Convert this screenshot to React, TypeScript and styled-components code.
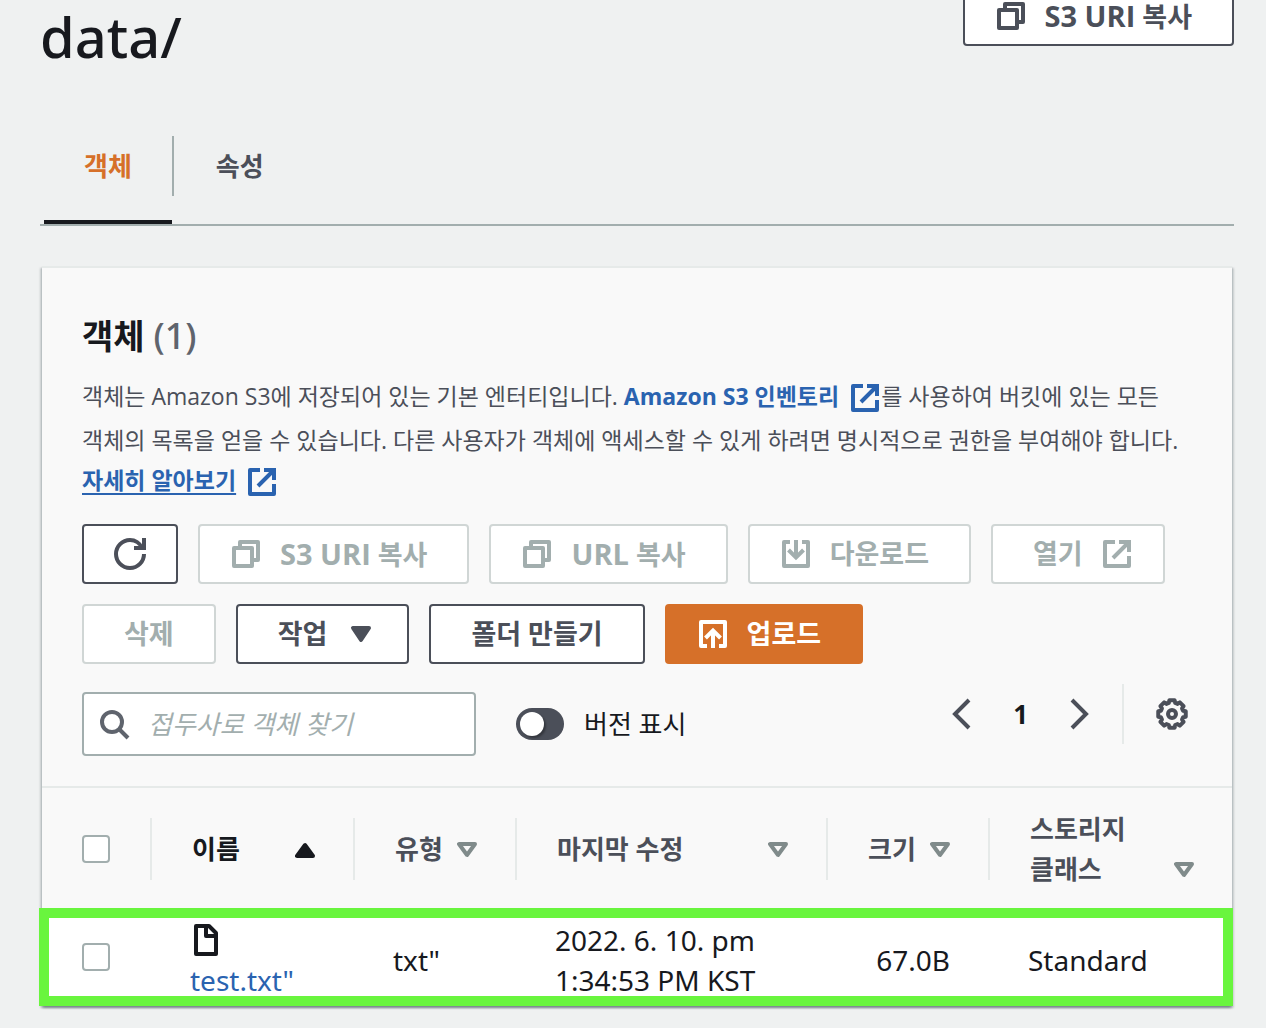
import React from "react";
import styled, { createGlobalStyle, css } from "styled-components";

const color = {
  page: "#eff1f1",
  panel: "#f9f9f9",
  text: "#17191e",
  muted: "#4b4f59",
  counter: "#5f646d",
  line: "#e6eae9",
  edge: "#a2aeae",
  disabled: "#a2aeae",
  disabledEdge: "#d0d6d5",
  sort: "#808b8b",
  link: "#2a63b0",
  accent: "#d67029",
  highlight: "#69f53e",
};

const mediumFamily = `"Noto Sans", "Open Sans", "Noto Sans CJK KR", sans-serif`;

const GlobalStyle = createGlobalStyle`
  *, *::before, *::after { box-sizing: border-box; }
  body {
    margin: 0;
    background: ${color.page};
    color: ${color.text};
    font: 26px/40px "Open Sans", "Noto Sans CJK KR", sans-serif;
  }
  h1, h2, p { margin: 0; }
  button, input { font: inherit; color: inherit; margin: 0; }
  button { border: 0; padding: 0; background: none; cursor: pointer; }
  svg { display: block; flex: none; }
`;

/* ---------- Icons ---------- */

const IconBox = styled.svg`
  width: 32px;
  height: 32px;
  fill: none;
  stroke: currentColor;
  stroke-width: 4px;
`;

const Icon = ({ children }: { children: React.ReactNode }) => (
  <IconBox viewBox="0 0 32 32" aria-hidden="true">
    {children}
  </IconBox>
);

const CopyIcon = () => (
  <Icon>
    <path strokeLinejoin="round" d="M4 10h18v18H4zM10 10V4h18v18h-6" />
  </Icon>
);
const ExternalIcon = () => (
  <Icon>
    <path strokeLinejoin="round" d="M14 4H4v24h24V18" />
    <path d="M18 4h10v10M12 20 27 5" />
  </Icon>
);
const DownloadIcon = () => (
  <Icon>
    <path strokeLinejoin="round" d="M10 4H4v24h24V4h-6" />
    <path d="M16 2v17M8.500 12l7.500 7.500 7.500-7.500" />
  </Icon>
);
const UploadIcon = () => (
  <Icon>
    <path strokeLinejoin="round" d="M10 28H4V4h24v24h-6" />
    <path d="M16 30V13M8.500 20l7.500-7.500 7.500 7.500" />
  </Icon>
);
const RefreshIcon = () => (
  <Icon>
    <path d="M30 16A14 14 0 1 1 16 2c5 0 10 3 12 8M30 0v10H20" />
  </Icon>
);
const SearchIcon = () => (
  <Icon>
    <circle cx="14" cy="14" r="10" />
    <path d="m21 21 9 9" />
  </Icon>
);
const CaretIcon = () => (
  <Icon>
    <path fill="currentColor" strokeLinejoin="round" d="M8 10h16l-8 12z" />
  </Icon>
);
const FileIcon = () => (
  <Icon>
    <path strokeLinejoin="round" d="M6 2h13l7 7v21H6zM16 2v10h10" />
  </Icon>
);

const gearOutline = Array.from({ length: 8 }, (_, tooth) =>
  [
    [-11, 14],
    [11, 14],
    [16, 11.5],
    [29, 11.5],
  ].map(([shift, radius]) => {
    const angle = ((tooth * 45 + shift - 90) * Math.PI) / 180;
    return `${16 + radius * Math.cos(angle)},${16 + radius * Math.sin(angle)}`;
  })
)
  .flat()
  .join(" ");

const GearIcon = () => (
  <Icon>
    <polygon strokeLinejoin="round" points={gearOutline} />
    <circle cx="16" cy="16" r="4" />
  </Icon>
);

const ChevronBox = styled.svg`
  width: 20px;
  height: 32px;
  fill: none;
  stroke: currentColor;
  stroke-width: 4px;
`;
const Chevron = ({ d }: { d: string }) => (
  <ChevronBox viewBox="0 0 20 32" aria-hidden="true">
    <path d={d} />
  </ChevronBox>
);

const SortBox = styled.svg<{ $active?: boolean }>`
  width: 20px;
  height: 16px;
  margin-bottom: 11px;
  fill: ${(p) => (p.$active ? "currentColor" : "none")};
  stroke: ${(p) => (p.$active ? "currentColor" : color.sort)};
  stroke-width: 4px;
  stroke-linejoin: round;
`;

/* ---------- Page header ---------- */

const Page = styled.main`
  padding: 0 32px 22px 40px;
`;

const PageHeader = styled.header`
  display: flex;
  justify-content: space-between;
  align-items: flex-start;
  margin-top: -14px;
`;

const PageTitle = styled.h1`
  margin-top: 14px;
  font-family: ${mediumFamily};
  font-size: 56px;
  line-height: 72px;
  font-weight: 500;
`;

type Tone = "normal" | "disabled" | "primary";

const tones = {
  normal: css`
    color: ${color.muted};
    background: #fff;
    border-color: ${color.muted};
  `,
  disabled: css`
    color: ${color.disabled};
    background: #fff;
    border-color: ${color.disabledEdge};
    cursor: default;
  `,
  primary: css`
    color: #fff;
    background: ${color.accent};
    border-color: ${color.accent};
  `,
};

const Button = styled.button<{ $tone?: Tone; $icon?: "start" | "end" | "only" }>`
  display: inline-flex;
  align-items: center;
  gap: 18px;
  height: 60px;
  padding: 0 ${(p) => (p.$icon === "end" || p.$icon === "only" ? 30 : 40)}px 0
    ${(p) => (p.$icon === "start" || p.$icon === "only" ? 30 : 40)}px;
  border: 2px solid;
  border-radius: 4px;
  font-size: 27px;
  font-weight: 700;
  white-space: nowrap;
  ${(p) => tones[p.$tone ?? "normal"]}
`;

const Latin = styled.span`
  font-size: 29px;
`;

/* ---------- Tabs ---------- */

const Tabs = styled.div`
  display: flex;
  margin-top: 64px;
  padding-left: 4px;
  border-bottom: 2px solid ${color.edge};
`;

const Tab = styled.button<{ $active?: boolean }>`
  padding: 0 40px 24px;
  border-bottom: 4px solid ${(p) => (p.$active ? color.text : "transparent")};
  color: ${(p) => (p.$active ? color.accent : color.muted)};
  font-weight: 700;
  line-height: 60px;

  &:not(:first-child) {
    padding-left: 42px;
  }
`;

const Divider = styled.span<{ $color: string }>`
  width: 2px;
  height: 60px;
  background: ${(p) => p.$color};
`;

/* ---------- Panel ---------- */

const Panel = styled.section`
  margin: 40px 2px 0;
  border-top: 2px solid ${color.line};
  background: ${color.panel};
  box-shadow:
    0 2px 2px rgba(0, 28, 36, 0.3),
    2px 2px 2px rgba(0, 28, 36, 0.15),
    -2px 2px 2px rgba(0, 28, 36, 0.15);
`;

const PanelHeader = styled.div`
  padding: 46px 40px 30px;
`;

const PanelTitle = styled.h2`
  font-size: 34px;
  line-height: 44px;
  font-weight: 700;
`;

const Counter = styled.span`
  color: ${color.counter};
  font-family: ${mediumFamily};
  font-size: 36px;
  font-weight: 500;
`;

const Description = styled.p`
  margin-top: 18px;
  color: ${color.muted};
  font-size: 23px;
  word-break: keep-all;
`;

const TextLink = styled.a<{ $underline?: boolean }>`
  color: ${color.link};
  font-weight: 700;
  text-decoration: none;

  span {
    text-decoration: ${(p) => (p.$underline ? "underline" : "none")};
    text-decoration-thickness: 2px;
    text-underline-offset: 4px;
  }
  svg {
    display: inline-block;
    margin: 0 0 6px 10px;
    vertical-align: -15px;
  }
`;

const Actions = styled.div`
  display: flex;
  flex-wrap: wrap;
  gap: 20px;
  margin-top: 20px;
`;

const Tools = styled.div`
  display: flex;
  justify-content: space-between;
  align-items: flex-start;
  margin-top: 20px;
`;

const Filters = styled.div`
  display: flex;
  align-items: center;
  gap: 40px;
  padding-top: 8px;
`;

const SearchField = styled.label`
  display: flex;
  align-items: center;
  gap: 18px;
  width: 394px;
  height: 64px;
  padding: 0 14px;
  border: 2px solid ${color.edge};
  border-radius: 4px;
  background: #fff;
  color: ${color.counter};
`;

const SearchInput = styled.input`
  flex: 1;
  min-width: 0;
  padding: 0;
  border: 0;
  outline: 0;
  background: none;
  color: ${color.text};

  &::placeholder {
    color: ${color.edge};
    font-style: italic;
    opacity: 1;
  }
`;

const ToggleLabel = styled.label`
  display: flex;
  align-items: center;
  gap: 20px;
  white-space: nowrap;
`;

const Toggle = styled.input`
  appearance: none;
  display: flex;
  width: 48px;
  height: 32px;
  padding: 4px;
  border-radius: 16px;
  background: ${color.muted};

  &::before {
    content: "";
    width: 24px;
    height: 24px;
    border-radius: 50%;
    background: #fff;
    box-shadow: 2px 2px 2px rgba(0, 0, 0, 0.3);
  }
  &:checked {
    justify-content: flex-end;
  }
`;

const Paging = styled.nav`
  display: flex;
  align-items: center;
  gap: 32px;
  padding-right: 4px;
  color: ${color.muted};
`;

const Pages = styled.div`
  display: flex;
  align-items: center;
  gap: 42px;
`;

const PageNumber = styled.button`
  color: ${color.text};
  font-weight: 700;
`;

/* ---------- Table ---------- */

const Table = styled.table`
  width: 100%;
  border-collapse: collapse;
  border-top: 2px solid ${color.line};
  table-layout: fixed;
`;

const Col = styled.col<{ $width?: number }>`
  width: ${(p) => (p.$width ? `${p.$width}px` : "auto")};
`;

const HeadCell = styled.th`
  padding: 21px 0 19px;
  text-align: left;
  vertical-align: middle;
  font-weight: 700;
`;

const HeadInner = styled.div<{ $last?: boolean }>`
  display: flex;
  align-items: center;
  min-height: 62px;
  padding: 0 38px 0 40px;
  border-right: ${(p) => (p.$last ? 0 : 2)}px solid ${color.line};
`;

const SortButton = styled.button<{ $active?: boolean }>`
  display: flex;
  flex: 1;
  justify-content: space-between;
  align-items: flex-end;
  color: ${(p) => (p.$active ? color.text : color.muted)};
  font-weight: 700;
  text-align: left;
  word-break: keep-all;
`;

const Checkbox = styled.input`
  appearance: none;
  display: block;
  width: 28px;
  height: 28px;
  border: 2px solid ${color.edge};
  border-radius: 4px;
  background: #fff;

  &:checked {
    background: ${color.link};
  }
`;

const Row = styled.tr`
  position: relative;
  background: #fff;
`;

const Cell = styled.td<{ $align?: "right" }>`
  padding: 12px 40px 6px 38px;
  font-family: ${mediumFamily};
  font-size: 28px;
  text-align: ${(p) => p.$align ?? "left"};
  vertical-align: middle;
`;

/* The frame spans the whole row: its containing block is the row, not this cell. */
const SelectCell = styled.td`
  padding: 0 40px;
  vertical-align: middle;

  &::after {
    content: "";
    position: absolute;
    inset: 0 -1px 0 -3px;
    border: 10px solid ${color.highlight};
    pointer-events: none;
  }
`;

const FileLink = styled.a`
  display: block;
  color: ${color.link};
  text-decoration: none;
  white-space: nowrap;

  svg {
    margin: 4px 0;
    color: ${color.text};
  }
`;

type Column = { label: string; width?: number; active?: boolean };

const columns: Column[] = [
  { label: "이름", width: 203, active: true },
  { label: "유형", width: 162 },
  { label: "마지막 수정", width: 311 },
  { label: "크기", width: 162 },
  { label: "스토리지 클래스" },
];

export default function App() {
  return (
    <>
      <GlobalStyle />
      <Page>
        <PageHeader>
          <PageTitle>data/</PageTitle>
          <Button type="button" $icon="start">
            <CopyIcon />
            <span>
              <Latin>S3 URI</Latin> 복사
            </span>
          </Button>
        </PageHeader>

        <Tabs role="tablist">
          <Tab type="button" role="tab" aria-selected="true" $active>
            객체
          </Tab>
          <Divider $color={color.edge} />
          <Tab type="button" role="tab" aria-selected="false">
            속성
          </Tab>
        </Tabs>

        <Panel>
          <PanelHeader>
            <PanelTitle>
              객체 <Counter>(1)</Counter>
            </PanelTitle>
            <Description>
              객체는 Amazon S3에 저장되어 있는 기본 엔터티입니다.{" "}
              <TextLink href="#inventory">
                <span>Amazon S3 인벤토리</span>
                <ExternalIcon />
              </TextLink>
              를 사용하여 버킷에 있는 모든 객체의 목록을 얻을 수 있습니다. 다른 사용자가 객체에
              액세스할 수 있게 하려면 명시적으로 권한을 부여해야 합니다.{" "}
              <TextLink href="#learn-more" $underline>
                <span>자세히 알아보기</span>
                <ExternalIcon />
              </TextLink>
            </Description>

            <Actions>
              <Button type="button" $icon="only" aria-label="새로 고침">
                <RefreshIcon />
              </Button>
              <Button type="button" $tone="disabled" $icon="start" disabled>
                <CopyIcon />
                <span>
                  <Latin>S3 URI</Latin> 복사
                </span>
              </Button>
              <Button type="button" $tone="disabled" $icon="start" disabled>
                <CopyIcon />
                <span>
                  <Latin>URL</Latin> 복사
                </span>
              </Button>
              <Button type="button" $tone="disabled" $icon="start" disabled>
                <DownloadIcon />
                다운로드
              </Button>
              <Button type="button" $tone="disabled" $icon="end" disabled>
                열기
                <ExternalIcon />
              </Button>
              <Button type="button" $tone="disabled" disabled>
                삭제
              </Button>
              <Button type="button" $icon="end">
                작업
                <CaretIcon />
              </Button>
              <Button type="button">폴더 만들기</Button>
              <Button type="button" $tone="primary" $icon="start">
                <UploadIcon />
                업로드
              </Button>
            </Actions>

            <Tools>
              <Filters>
                <SearchField>
                  <SearchIcon />
                  <SearchInput
                    type="text"
                    placeholder="접두사로 객체 찾기"
                    aria-label="접두사로 객체 찾기"
                  />
                </SearchField>
                <ToggleLabel>
                  <Toggle type="checkbox" role="switch" />
                  버전 표시
                </ToggleLabel>
              </Filters>
              <Paging aria-label="페이지">
                <Pages>
                  <button type="button" aria-label="이전 페이지">
                    <Chevron d="M18 2 4 16l14 14" />
                  </button>
                  <PageNumber type="button">1</PageNumber>
                  <button type="button" aria-label="다음 페이지">
                    <Chevron d="m2 2 14 14L2 30" />
                  </button>
                </Pages>
                <Divider $color={color.line} />
                <button type="button" aria-label="기본 설정">
                  <GearIcon />
                </button>
              </Paging>
            </Tools>
          </PanelHeader>

          <Table>
            <colgroup>
              <Col $width={110} />
              {columns.map((c) => (
                <Col key={c.label} $width={c.width} />
              ))}
            </colgroup>
            <thead>
              <tr>
                <HeadCell>
                  <HeadInner>
                    <Checkbox type="checkbox" aria-label="모두 선택" />
                  </HeadInner>
                </HeadCell>
                {columns.map((c, i) => (
                  <HeadCell key={c.label} scope="col">
                    <HeadInner $last={i === columns.length - 1}>
                      <SortButton type="button" $active={c.active}>
                        {c.label}
                        <SortBox viewBox="0 0 20 16" $active={c.active} aria-hidden="true">
                          <path d={c.active ? "M2 14h16L10 3z" : "M2 2h16l-8 11z"} />
                        </SortBox>
                      </SortButton>
                    </HeadInner>
                  </HeadCell>
                ))}
              </tr>
            </thead>
            <tbody>
              <Row>
                <SelectCell>
                  <Checkbox type="checkbox" aria-label="test.txt 선택" />
                </SelectCell>
                <Cell>
                  <FileLink href="#test.txt">
                    <FileIcon />
                    test.txt"
                  </FileLink>
                </Cell>
                <Cell>txt"</Cell>
                <Cell>2022. 6. 10. pm 1:34:53 PM KST</Cell>
                <Cell $align="right">67.0B</Cell>
                <Cell>Standard</Cell>
              </Row>
            </tbody>
          </Table>
        </Panel>
      </Page>
    </>
  );
}
